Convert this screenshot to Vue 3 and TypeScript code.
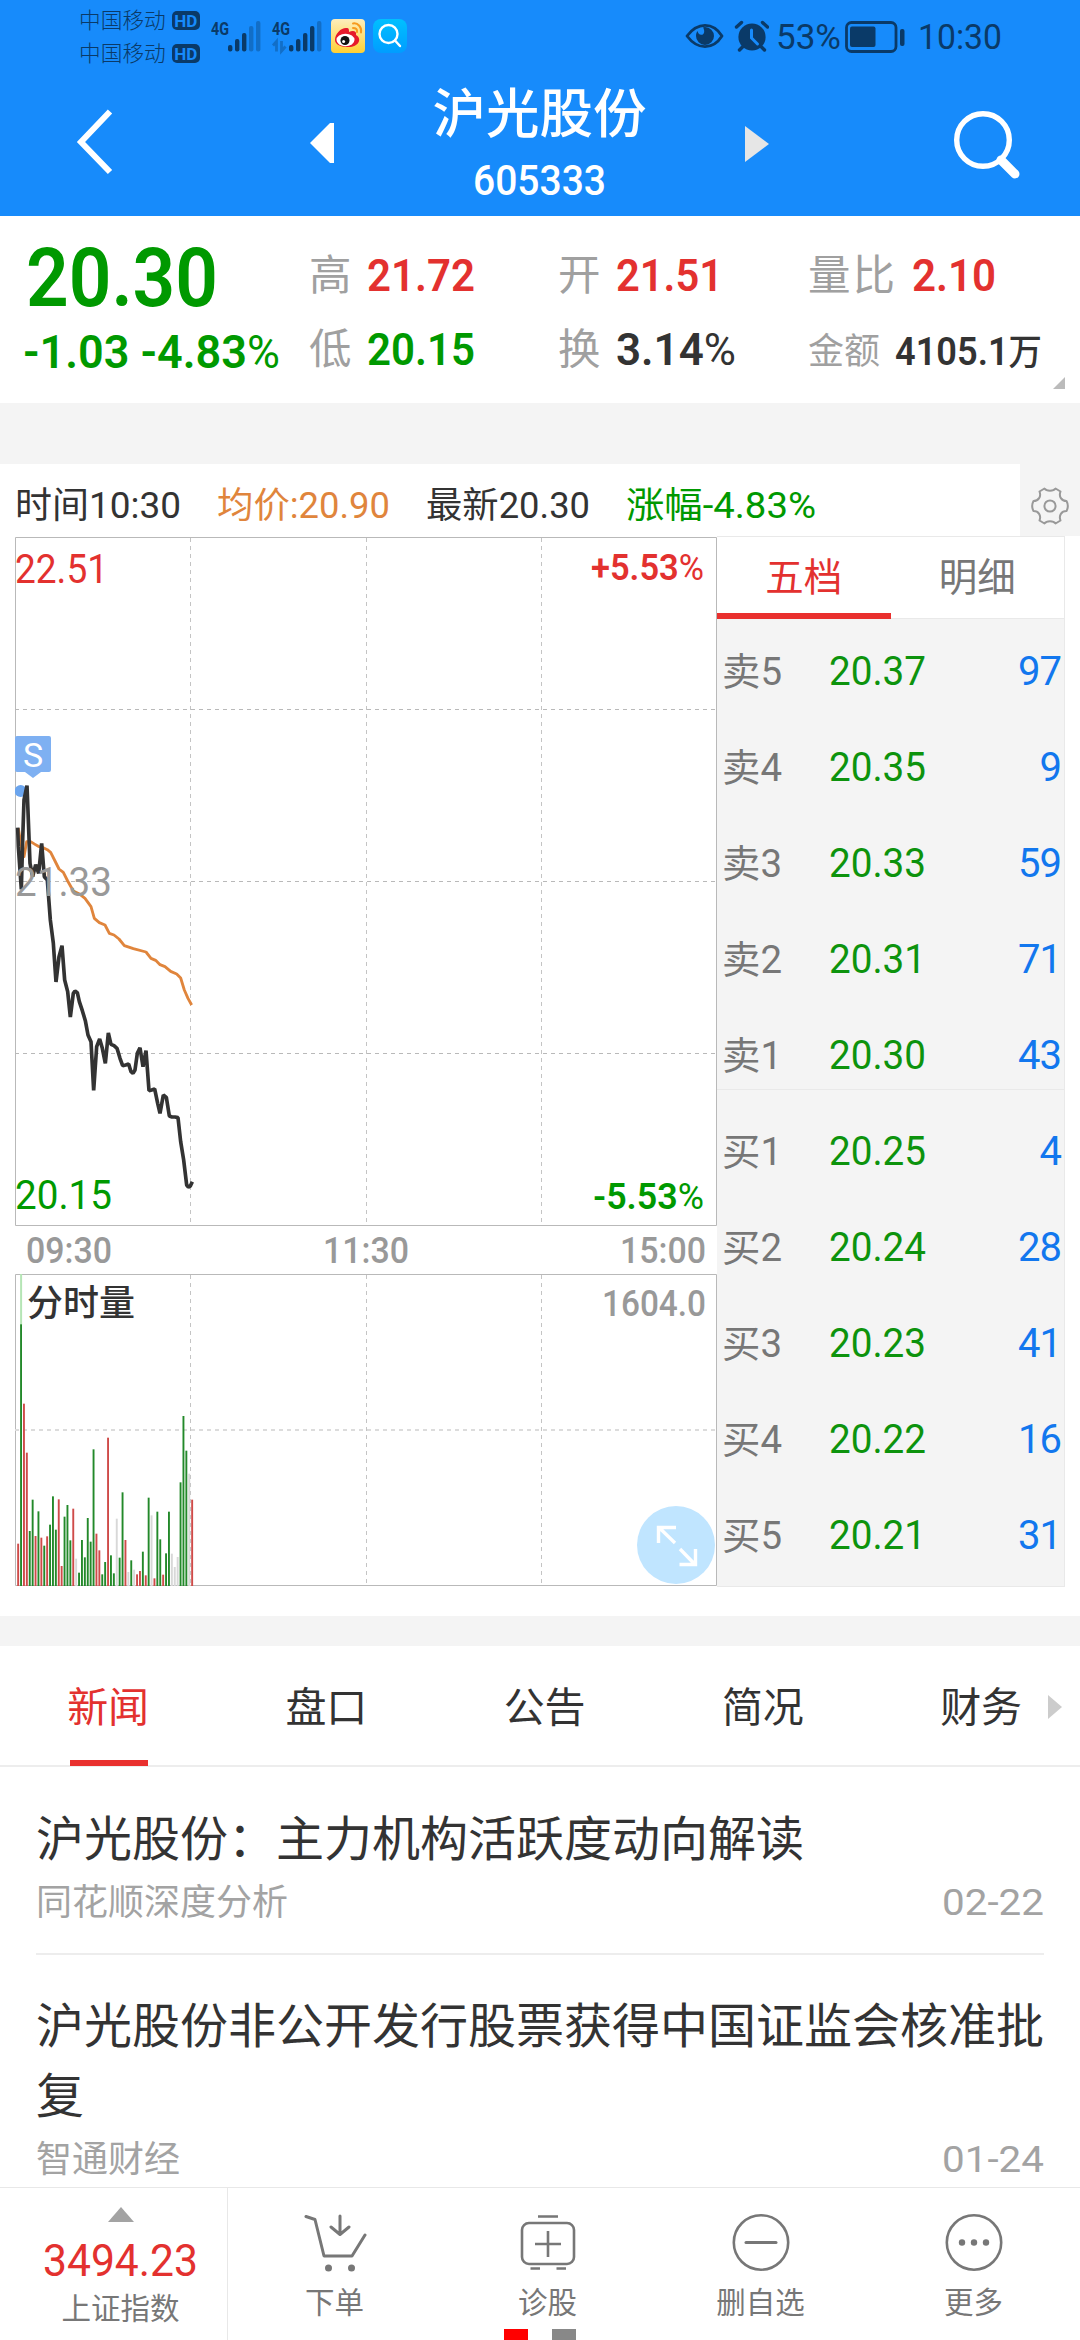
<script setup lang="ts">
import type { Directive } from 'vue'

// Condenses a label horizontally so that it occupies exactly the given width.
const vFit: Directive<HTMLElement, number> = {
  mounted(el, { value }) {
    const natural = el.getBoundingClientRect().width
    el.style.transform = `scaleX(${value / natural})`
    el.style.marginRight = `${value - natural}px`
  },
}

interface Level { name: string; price: string; qty: string }
const levels: Level[] = [
  { name: '卖5', price: '20.37', qty: '97' },
  { name: '卖4', price: '20.35', qty: '9' },
  { name: '卖3', price: '20.33', qty: '59' },
  { name: '卖2', price: '20.31', qty: '71' },
  { name: '卖1', price: '20.30', qty: '43' },
  { name: '买1', price: '20.25', qty: '4' },
  { name: '买2', price: '20.24', qty: '28' },
  { name: '买3', price: '20.23', qty: '41' },
  { name: '买4', price: '20.22', qty: '16' },
  { name: '买5', price: '20.21', qty: '31' },
]

const tabs = ['新闻', '盘口', '公告', '简况', '财务']

const pricePoints =
  '53,143 55,200 64,328 68,180 72,60 81,17 90,250 98,290 107,254 116,280 125,190 133,290 142,300 151,420 160,490 168,606 177,530 186,497 194,600 203,635 211,711 220,640 225,633 232,638 238,665 247,692 256,722 264,765 273,785 281,931 290,800 299,777 307,805 316,850 325,759 333,793 342,797 351,805 360,835 368,857 377,855 386,852 393,875 399,880 405,870 412,820 420,803 429,860 438,812 447,932 455,930 464,927 473,970 480,1000 490,945 499,952 508,1008 516,1011 525,1011 534,1013 542,1085 551,1140 560,1215 565,1221 571,1218 577,1205'
const averagePoints =
  '55,145 64,200 72,230 80,185 92,185 105,193 115,199 130,203 142,209 152,217 165,243 177,267 190,277 203,303 220,333 240,343 255,355 273,380 283,415 298,428 315,435 328,460 342,465 357,477 373,497 400,506 438,516 453,535 467,541 480,554 495,560 512,574 530,582 542,594 553,630 564,655 575,675'

// One bar a minute: colour key followed by height in thirds of a pixel.
const volume =
  'r127 g785 r547 r400 g165 g259 r150 g224 r145 g121 r149 g184 g269 g169 r260 r60 g208 g243 g137 r232 w82 g40 g138 g86 g204 g133 g410 r157 r107 g35 g72 r445 g92 g38 w202 g85 g281 r138 w42 g77 w49 r35 r45 g103 r32 g265 w212 r23 g223 g140 r34 g98 g223 w97 w57 w87 g311 g510 g406 w337 r259'
const colours: Record<string, string> = { r: '#cf4b49', g: '#23892a', w: '#d8d8d8' }
const bars = volume.split(' ').map((b, i) => {
  const h = Number(b.slice(1)) / 3
  return { x: 2.2 + i * 2.9, y: 312 - h, h, fill: colours[b[0]] }
})
</script>

<template>
  <div class="screen">
    <header class="top">
      <div class="status">
        <div class="carriers">
          <div v-for="n in 2" :key="n" class="carrier">
            <span>中国移动</span><b class="hd">HD</b>
          </div>
        </div>
        <svg class="signals" width="196" height="44" viewBox="0 0 196 44" fill="#0a3a68">
          <text x="0" y="19" class="gen" textLength="18" lengthAdjust="spacingAndGlyphs">4G</text>
          <rect x="17" y="29" width="4.4" height="6.500" rx="2" />
          <rect x="24" y="23" width="4.4" height="12.500" rx="2" />
          <rect x="31" y="17" width="4.4" height="18.500" rx="2" />
          <g opacity=".35">
            <rect x="38" y="10" width="4.4" height="25.500" rx="2" />
            <rect x="45" y="5" width="4.4" height="30.500" rx="2" />
          </g>
          <text x="61" y="19" class="gen" textLength="18" lengthAdjust="spacingAndGlyphs">4G</text>
          <path d="M62 29.500l3.500-4V35.500M70.500 25v10l4-4.500" fill="none" stroke="#0a3a68" stroke-width="2.800" opacity=".35" />
          <rect x="78" y="29" width="4.4" height="6.500" rx="2" />
          <rect x="85" y="23" width="4.4" height="12.500" rx="2" />
          <rect x="92" y="17" width="4.400" height="18.500" rx="2" />
          <rect x="99" y="10" width="4.400" height="25.500" rx="2" />
          <rect x="106" y="5" width="4.400" height="30.500" rx="2" opacity=".35" />
          <defs>
            <linearGradient id="wb" x1="0" y1="0" x2="0" y2="1">
              <stop offset="0" stop-color="#fdeebd" /><stop offset="1" stop-color="#ffd033" />
            </linearGradient>
            <linearGradient id="sb" x1="0" y1="0" x2="0" y2="1">
              <stop offset="0" stop-color="#00c0ff" /><stop offset="1" stop-color="#009dff" />
            </linearGradient>
          </defs>
          <rect x="120" y="3" width="34" height="34" rx="4" fill="url(#wb)" />
          <path d="M124 24c0-7 7-13 12-12 2 0 2 2 2 4 4-2 8-1 7 3 7 4 2 13-9 12-7 0-12-3-12-7z" fill="#e6192b" />
          <ellipse cx="134.500" cy="24" rx="9" ry="6.200" fill="#fff" />
          <circle cx="134" cy="24.500" r="4.500" fill="#111" />
          <circle cx="132.600" cy="25.500" r="1.500" fill="#fff" />
          <path d="M142 7.500c5-1 9 4 8 9M142 12c3 0 4.500 1.500 4 4" fill="none" stroke="#f79a1d" stroke-width="2" stroke-linecap="round" />
          <rect x="162" y="3" width="34" height="34" rx="8" fill="url(#sb)" />
          <circle cx="177.500" cy="18" r="9" fill="none" stroke="#fff" stroke-width="2.400" />
          <path d="M184 24.500l5 5.500" stroke="#fff" stroke-width="2.400" stroke-linecap="round" />
        </svg>
        <svg class="eye" width="84" height="32" viewBox="0 0 84 32">
          <path d="M2 16C8 8 14 5.400 20 5.400S32 8 37 16c-5 8-11 10.600-17 10.600S8 24 2 16z" fill="none" stroke="#0a3a68" stroke-width="2.800" stroke-linejoin="round" />
          <path d="M20 7a9 9 0 1 1-9 9c0-2 .6-3.600 1.500-5 .5 2.600 2 4 4 3.800 2.500-.2 3.800-3 1.600-7.600z" fill="#0a3a68" />
          <circle cx="67" cy="17" r="13.600" fill="#0a3a68" />
          <path d="M51.500 7l5-4.500M82.500 7l-5-4.500M54.500 30l3-3M79.500 30l-3-3" stroke="#0a3a68" stroke-width="3.400" stroke-linecap="round" />
          <path d="M66.500 10v8l6 6" fill="none" stroke="#178bfb" stroke-width="3" stroke-linecap="round" />
        </svg>
        <span v-fit="65" class="fit battery-text">53%</span>
        <svg class="battery" width="61" height="32" viewBox="0 0 61 32">
          <rect x="1.500" y="1.500" width="49.500" height="29" rx="5" fill="none" stroke="#0a3a68" stroke-width="2.800" />
          <rect x="5" y="5.500" width="25.500" height="20.500" rx="2" fill="#0a3a68" />
          <rect x="55" y="8" width="4.500" height="17" rx="2" fill="#0a3a68" />
        </svg>
        <span v-fit="84" class="fit clock">10:30</span>
      </div>
      <nav class="titlebar">
        <svg class="back" width="40" height="70" viewBox="0 0 40 70">
          <path d="M34 4.500L5 35l29 30" fill="none" stroke="#fff" stroke-width="6" />
        </svg>
        <svg class="prev" width="24" height="40" viewBox="0 0 24 40"><path d="M24 0v40h-4L0 20 20 0z" fill="#fff" /></svg>
        <div class="title">
          <h1>沪光股份</h1>
          <span v-fit="133" class="fit code">605333</span>
        </div>
        <svg class="next" width="24" height="36" viewBox="0 0 24 36"><path d="M0 0l24 18L0 36z" fill="#e6e6e6" /></svg>
        <svg class="search" width="70" height="72" viewBox="0 0 70 72">
          <circle cx="31" cy="31" r="26.300" fill="none" stroke="#fff" stroke-width="5.400" />
          <path d="M49 51l14 14" stroke="#fff" stroke-width="9" stroke-linecap="round" />
        </svg>
      </nav>
    </header>

    <section class="quote">
      <div class="last">
        <span v-fit="192" class="fit price">20.30</span>
        <span v-fit="257" class="fit change">-1.03 -4.83<i>%</i></span>
      </div>
      <div class="stats">
        <div class="stat"><label>高</label><b v-fit="108" class="fit red">21.72</b></div>
        <div class="stat"><label>开</label><b v-fit="107" class="fit red">21.51</b></div>
        <div class="stat wide"><label>量比</label><b v-fit="84" class="fit red">2.10</b></div>
        <div class="stat"><label>低</label><b v-fit="108" class="fit green">20.15</b></div>
        <div class="stat"><label>换</label><b v-fit="120" class="fit">3.14<i>%</i></b></div>
        <div class="stat small"><label>金额</label><b v-fit="147" class="fit">4105.1<em>万</em></b></div>
      </div>
      <svg class="corner" width="12" height="12"><path d="M12 0v12H0z" fill="#bbb" /></svg>
    </section>

    <div class="gap-large"></div>

    <section class="info">
      <div class="readout">
        <span v-fit="166" class="fit">时间10:30</span>
        <span v-fit="173" class="fit orange">均价:20.90</span>
        <span v-fit="164" class="fit">最新20.30</span>
        <span v-fit="190" class="fit green">涨幅-4.83%</span>
      </div>
      <div class="settings">
        <svg width="40" height="40" viewBox="0 0 40 40" fill="none" stroke="#999" stroke-width="2" stroke-linejoin="round">
          <path d="M14.500 2.500c2 3 9 3 11 0l5 3c-2 5 1 9.500 6 9.500 1.600 3 1.600 7 0 10-5 0-8 4.500-6 9.500l-5 3c-2-3-9-3-11 0l-5-3c2-5-1-9.500-6-9.500-1.600-3-1.600-7 0-10 5 0 8-4.500 6-9.500z" />
          <circle cx="20" cy="20" r="5.600" />
        </svg>
      </div>
    </section>

    <section class="market">
      <div class="charts">
        <div class="plot price-plot">
          <svg width="702" height="689" viewBox="0 0 702 689" fill="none">
            <path d="M.5.500h701v688H.5z" stroke="#b9b9b9" />
            <path d="M0 172.500h702M0 344.500h702M0 516.500h702" stroke="#b9b9b9" stroke-dasharray="4 4" />
            <path d="M175.500 1v688M351.500 1v688M526.500 1v688" stroke="#c4c4c4" stroke-dasharray="4 4" />
            <g transform="translate(-15 243) scale(.33333)">
              <polyline :points="averagePoints" stroke="#e0853c" stroke-width="8.500" stroke-linejoin="round" />
              <circle cx="62" cy="33" r="18" fill="#6ba5ee" />
              <polyline :points="pricePoints" stroke="#333" stroke-width="11" stroke-linejoin="bevel" />
            </g>
            <path d="M2 199h32a2 2 0 0 1 2 2v32a2 2 0 0 1-2 2h-8l-8 6-8-6H2a2 2 0 0 1-2-2v-32a2 2 0 0 1 2-2z" fill="#7eb0f2" />
          </svg>
          <span class="marker">S</span>
          <span v-fit="93" class="fit lbl hi">22.51</span>
          <span v-fit="97" class="fit lbl mid">21.33</span>
          <span v-fit="97" class="fit lbl lo">20.15</span>
          <span class="pct up"><b v-fit="113" class="fit">+5.53<i>%</i></b></span>
          <span class="pct down"><b v-fit="111" class="fit">-5.53<i>%</i></b></span>
        </div>
        <div class="axis">
          <b v-fit="86" class="fit">09:30</b><b v-fit="86" class="fit">11:30</b><b v-fit="86" class="fit">15:00</b>
        </div>
        <div class="plot volume-plot">
          <svg width="702" height="312" viewBox="0 0 702 312" fill="none">
            <path d="M.5.500h701v311H.5z" stroke="#b9b9b9" />
            <path d="M0 156h702" stroke="#dcdcdc" stroke-width="2" stroke-dasharray="4 4" />
            <path d="M175.500 1v311M351.500 1v311M526.500 1v311" stroke="#c4c4c4" stroke-dasharray="4 4" />
            <rect x="5.100" y="0" width="2" height="51" fill="#b5e5b5" />
            <rect v-for="b in bars" :key="b.x" :x="b.x" :y="b.y" width="1.900" :height="b.h" :fill="b.fill" />
          </svg>
          <span class="vol-name">分时量</span>
          <span class="vol-max"><b v-fit="104" class="fit">1604.0</b></span>
          <svg class="expand" width="78" height="78" viewBox="0 0 78 78" fill="none">
            <circle cx="39" cy="39" r="39" fill="#c0e5ff" />
            <path d="M38 37L22 21.500M21.500 37V21.500H39M43 43l15 15.500M42.500 58.500h16V43" stroke="#fff" stroke-width="3.400" />
          </svg>
        </div>
      </div>
      <div class="book">
        <div class="book-tabs"><span class="on">五档</span><span>明细</span></div>
        <div class="levels">
          <div v-for="l in levels" :key="l.name" class="level">
            <span class="lname"><span v-fit="60" class="fit">{{ l.name }}</span></span>
            <span class="lprice"><span v-fit="97" class="fit">{{ l.price }}</span></span>
            <span class="lqty">{{ l.qty }}</span>
          </div>
        </div>
      </div>
    </section>

    <div class="gap-small"></div>

    <nav class="tabs">
      <span v-for="(t, i) in tabs" :key="t" :class="{ on: i === 0 }">{{ t }}</span>
      <svg class="more" width="14" height="24"><path d="M0 0l14 12L0 24z" fill="#ccc" /></svg>
    </nav>

    <main class="news">
      <article>
        <h2>沪光股份：主力机构活跃度动向解读</h2>
        <p><span>同花顺深度分析</span><time v-fit="102" class="fit">02-22</time></p>
      </article>
      <article>
        <h2>沪光股份非公开发行股票获得中国证监会核准批复</h2>
        <p><span>智通财经</span><time v-fit="102" class="fit">01-24</time></p>
      </article>
    </main>

    <footer class="bar">
      <div class="index">
        <svg width="26" height="15"><path d="M13 0l13 15H0z" fill="#a3a3a3" /></svg>
        <span v-fit="155" class="fit points">3494.23</span>
        <span class="iname">上证指数</span>
      </div>
      <div class="action">
        <svg width="64" height="62" viewBox="0 0 64 62" fill="none" stroke="#777" stroke-width="3" stroke-linecap="round" stroke-linejoin="round">
          <path d="M3 4.500l9 3L21 44h28l13-21M37 4v18M28 15l9 7.500 9-7.500" />
          <circle cx="25.500" cy="56" r="3.500" fill="#777" stroke="none" /><circle cx="48.500" cy="56" r="3.500" fill="#777" stroke="none" />
        </svg>
        <span>下单</span>
      </div>
      <div class="action">
        <svg width="64" height="62" viewBox="0 0 64 62" fill="none" stroke="#777" stroke-width="2.600">
          <rect x="6" y="11" width="52" height="41" rx="7" />
          <path d="M22 4.500h20M14.500 56.500h9.500M40.500 56.500H50M32 19v26M19 32h26" />
        </svg>
        <span>诊股</span>
      </div>
      <div class="action">
        <svg width="64" height="62" viewBox="0 0 64 62" fill="none" stroke="#777" stroke-width="2.600">
          <circle cx="32" cy="30.500" r="27.200" /><path d="M17 30.500h30" stroke-width="3" stroke-linecap="round" />
        </svg>
        <span>删自选</span>
      </div>
      <div class="action">
        <svg width="64" height="62" viewBox="0 0 64 62" fill="none" stroke="#777" stroke-width="2.600">
          <circle cx="32" cy="30.500" r="27.200" />
          <g fill="#777" stroke="none"><circle cx="20" cy="30.500" r="3.200" /><circle cx="32" cy="30.500" r="3.200" /><circle cx="44" cy="30.500" r="3.200" /></g>
        </svg>
        <span>更多</span>
      </div>
      <div class="pager"><i></i><i></i></div>
    </footer>
  </div>
</template>

<style>
body { background: #fff; }
</style>

<style scoped>
.screen {
  position: relative;
  width: 1080px;
  height: 2340px;
  overflow: hidden;
  background: #fff;
  color: #333;
  font-family: Roboto, "Noto Sans CJK SC", sans-serif;
}
.screen * { box-sizing: border-box; }
svg { display: block; flex: none; }
i, em { font-style: normal; }
.fit { display: inline-block; flex: none; width: max-content; white-space: nowrap; transform-origin: 0 50%; }
b, .change { font-weight: 600; }
b i, .change i { font-weight: 400; }
.red { color: #e3312f; }
.green { color: #090; }
.orange { color: #e0853c; }

.top { height: 216px; background: #178bfb; color: #0a3a68; }
.status { display: flex; height: 72px; padding-left: 79px; }
.carriers { width: 132px; padding-top: 4px; font-size: 21.700px; line-height: 33px; }
.carrier { display: flex; align-items: center; height: 33px; gap: 6px; font-weight: 300; }
.hd {
  width: 28px; height: 19px; border-radius: 5px; background: #0a3a68; color: #178bfb;
  font-size: 17px; line-height: 20px; text-align: center; font-weight: 700;
}
.signals { margin-top: 16px; }
.gen { font: 700 19px Roboto, sans-serif; }
.eye { margin: 20px 0 0 278px; }
.battery-text { margin-left: 7px; font-size: 35px; line-height: 76px; }
.battery { margin: 21px 0 0 4px; }
.clock { margin-left: 12px; font-size: 35px; line-height: 76px; }

.titlebar { display: flex; color: #fff; }
.back { margin: 35px 0 0 76px; }
.prev { margin: 51px 0 0 194px; }
.title { width: 411px; text-align: center; }
h1 { margin: 0; font-size: 53.500px; line-height: 86px; font-weight: 500; }
.title .code { font-size: 42px; line-height: 50px; margin-top: -2px; font-weight: 500; vertical-align: top; }
.next { margin-top: 54px; }
.search { margin: 37px 0 0 183px; }

.quote { position: relative; display: flex; height: 187px; }
.last { display: flex; flex-direction: column; width: 309px; color: #090; }
.price { margin: 15px 0 0 26px; font-size: 81px; line-height: 96px; font-weight: 600; }
.change { margin: 0 0 0 23px; font-size: 46px; line-height: 50px; }
.stats { display: grid; grid-template-columns: 249px 250px 270px; grid-auto-rows: 74px; padding-top: 23px; }
.stat { display: flex; align-items: center; font-size: 45px; line-height: 74px; }
.stat label { margin-right: 15px; color: #a0a0a0; font-size: 42.500px; }
.stat.wide label { letter-spacing: 2px; }
.stat.small { font-size: 39px; }
.stat.small label { font-size: 36px; padding-top: 4px; }
.stat.small b { padding-top: 4px; }
.stat em { font-weight: 500; font-size: 36px; }
.corner { position: absolute; right: 15px; bottom: 14px; }

.gap-large { height: 61px; background: #f4f4f4; }
.info { display: flex; height: 72px; }
.readout { display: flex; flex: 1; gap: 36px; padding-left: 15px; font-size: 36px; line-height: 85px; height: 72px; }
.settings { width: 60px; padding: 22px 0 0 10px; background: #f4f4f4; }

.market { display: flex; height: 1080px; padding: 1px 0 0 15px; }
.charts { width: 702px; }
.plot { position: relative; }
.marker { position: absolute; left: 0; top: 199px; width: 36px; text-align: center; font-size: 34px; line-height: 38px; color: #fff; }
.lbl { position: absolute; left: 0; font-size: 41px; line-height: 48px; }
.hi { top: 8px; color: #e3312f; }
.mid { top: 321px; color: #999; }
.lo { top: 634px; color: #090; }
.pct { position: absolute; right: 13px; font-size: 36.500px; line-height: 44px; }
.up { top: 9px; color: #e3312f; }
.down { top: 638px; color: #090; }
.axis { display: flex; justify-content: space-between; height: 48px; padding: 0 11px; color: #999; font-size: 36.500px; line-height: 50px; }
.axis b, .vol-max b { font-weight: 500; }
.vol-name { position: absolute; left: 12px; top: 9px; font-size: 36px; line-height: 42px; font-weight: 500; }
.vol-max { position: absolute; right: 11px; top: 8px; color: #999; font-size: 37px; line-height: 44px; }
.expand { position: absolute; right: 2px; bottom: 2px; }
.book { width: 348px; height: 1051px; margin-top: -1px; border: 1px solid #e9e9e9; border-width: 1px 1px 1px 0; background: #f4f4f4; }
.book-tabs { display: flex; height: 82px; border-bottom: 1px solid #e9e9e9; background: #fff; }
.book-tabs span { flex: 1; text-align: center; font-size: 38.500px; line-height: 81px; height: 82px; color: #777; border-bottom: 6px solid transparent; }
.book-tabs .on { color: #e3312f; border-color: #e9302e; }
.levels { padding-top: 5px; }
.level { position: relative; display: flex; height: 96px; padding: 0 3px 0 5px; line-height: 96px; }
.level:nth-child(5)::after { content: ""; position: absolute; left: 0; right: 0; bottom: 14px; height: 1px; background: #e9e9e9; }
.lname { width: 107px; font-size: 38px; color: #777; }
.lprice { flex: 1; font-size: 40px; color: #0d930d; }
.lqty { font-size: 40px; color: #1277ee; letter-spacing: -1px; }

.gap-small { height: 30px; background: #f4f4f4; }
.tabs { position: relative; display: flex; height: 121px; margin-left: -1px; border-bottom: 2px solid #ededed; }
.tabs span { position: relative; width: 218.250px; flex: none; text-align: center; font-size: 41px; line-height: 124px; }
.tabs .on { color: #e3312f; }
.tabs .on::after { content: ""; position: absolute; left: 71px; top: 114px; width: 78px; height: 6px; background: #e9302e; }
.more { position: absolute; right: 18px; top: 49px; }

.news { padding: 0 36px; }
article { height: 188px; padding-top: 38px; border-bottom: 2px solid #ededed; }
article + article { height: auto; border: 0; padding-top: 37px; }
h2 { margin: 0; font-size: 48px; line-height: 70px; font-weight: 400; }
article p { display: flex; justify-content: space-between; margin: 0; padding-top: 4px; color: #a3a3a3; font-size: 36px; line-height: 48px; }

.bar { position: absolute; left: 0; right: 0; bottom: 0; display: flex; height: 153px; border-top: 1px solid #e8e8e8; background: #fff; }
.index { width: 228px; padding-top: 19px; border-right: 1px solid #e8e8e8; display: flex; flex-direction: column; align-items: center; }
.index svg { margin-left: 14px; }
.points { margin-top: 13px; font-size: 44px; line-height: 52px; color: #e3312f; align-self: flex-start; margin-left: 43px; }
.iname { margin: 0 0 0 14px; font-size: 29.500px; line-height: 44px; color: #777; }
.action { flex: 1; display: flex; flex-direction: column; align-items: center; padding-top: 24px; font-size: 29.500px; color: #777; line-height: 44px; }
.action span { margin-top: 7px; }
.pager { position: absolute; left: 504px; bottom: 0; display: flex; gap: 24px; }
.pager i { width: 24px; height: 11px; background: #f00; }
.pager i + i { background: #888; }
</style>
